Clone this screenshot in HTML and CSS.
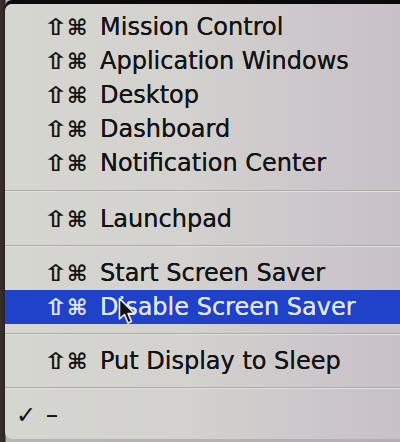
FILE: index.html
```html
<!DOCTYPE html>
<html lang="en">
<head>
  <meta charset="UTF-8">
  <meta name="viewport" content="width=device-width, initial-scale=1.0">
  <title>Hot Corners</title>
  <link rel="stylesheet" href="styles.css">
</head>
<body>
  <div class="menu">
    <div class="item"><span class="check"></span><span class="shift">⇧</span><span class="cmd">⌘</span><span class="label">Mission Control</span></div>
    <div class="item"><span class="check"></span><span class="shift">⇧</span><span class="cmd">⌘</span><span class="label">Application Windows</span></div>
    <div class="item"><span class="check"></span><span class="shift">⇧</span><span class="cmd">⌘</span><span class="label">Desktop</span></div>
    <div class="item"><span class="check"></span><span class="shift">⇧</span><span class="cmd">⌘</span><span class="label">Dashboard</span></div>
    <div class="item"><span class="check"></span><span class="shift">⇧</span><span class="cmd">⌘</span><span class="label">Notification Center</span></div>
    <div class="sep sep-wide"></div>
    <div class="item"><span class="check"></span><span class="shift">⇧</span><span class="cmd">⌘</span><span class="label">Launchpad</span></div>
    <div class="sep"></div>
    <div class="item"><span class="check"></span><span class="shift">⇧</span><span class="cmd">⌘</span><span class="label">Start Screen Saver</span></div>
    <div class="item active">
      <span class="check"></span><span class="shift">⇧</span><span class="cmd">⌘</span><span class="label">Disable Screen Saver</span>
      <!-- mouse pointer sitting over the highlighted item -->
      <svg class="cursor" width="18" height="28" viewBox="0 0 18 28">
        <path d="M1.5 1.5 L1.5 22 L6.5 17.5 L10 26 L13.5 24.5 L10 16.5 L16.5 16.5 Z" fill="#111" stroke="#f2f2f2" stroke-width="1.6" stroke-linejoin="round"/>
      </svg>
    </div>
    <div class="sep"></div>
    <div class="item"><span class="check"></span><span class="shift">⇧</span><span class="cmd">⌘</span><span class="label">Put Display to Sleep</span></div>
    <div class="sep"></div>
    <div class="item"><span class="check">✓</span><span class="label dash">–</span></div>
  </div>
</body>
</html>
```

FILE: styles.css
```css
body {
  margin: 0;
  padding: 0;
  height: 442px;
  overflow: hidden;
  background: linear-gradient(to right, #3b302a 0, #2a2522 5px, #b9b4b8 6px, #b4aeb3 100%);
  font-family: "DejaVu Sans", "Liberation Sans", sans-serif;
}

/* the pop-up menu */
.menu {
  margin: 4px 0 0 5px;
  padding: 6px 0 7px;
  border-radius: 7px 0 0 7px;
  background: linear-gradient(to right, #d6d6d1 0%, #d3d2ce 45%, #cdc8cb 75%, #c8c1c8 100%);
  box-shadow: 0 -4px 0 #0a0a0a;
  color: #141414;
  font-size: 24px;
  position: relative;
}

.item {
  display: flex;
  align-items: center;
  height: 34px;
  position: relative;
  white-space: nowrap;
}

.check {
  width: 27px;
  margin-left: 11px;
  font-size: 24px;
  font-weight: bold;
  font-style: italic;
}

/* the shift arrow glyph is narrow in DejaVu, so widen it a bit */
.shift {
  display: inline-block;
  width: 24px;
  font-size: 23px;
  font-weight: bold;
  line-height: 1;
  transform: scaleX(1.3);
  transform-origin: left center;
}

.cmd {
  width: 33px;
  font-size: 22px;
  font-weight: bold;
}

.label {
  text-shadow: 0 0 0.4px currentColor;
}

.dash {
  margin-left: 3px;
}

/* highlighted row */
.active {
  background: #1f42c9;
  color: #e2e6f4;
}

.cursor {
  position: absolute;
  left: 113px;
  top: 7px;
}

/* separators */
.sep {
  height: 20px;
  display: flex;
  align-items: center;
}

.sep::after {
  content: "";
  flex: 1;
  height: 1px;
  background: #aeaca8;
  border-bottom: 1px solid #e0dfdb;
}

.sep-wide {
  height: 22px;
}
```
